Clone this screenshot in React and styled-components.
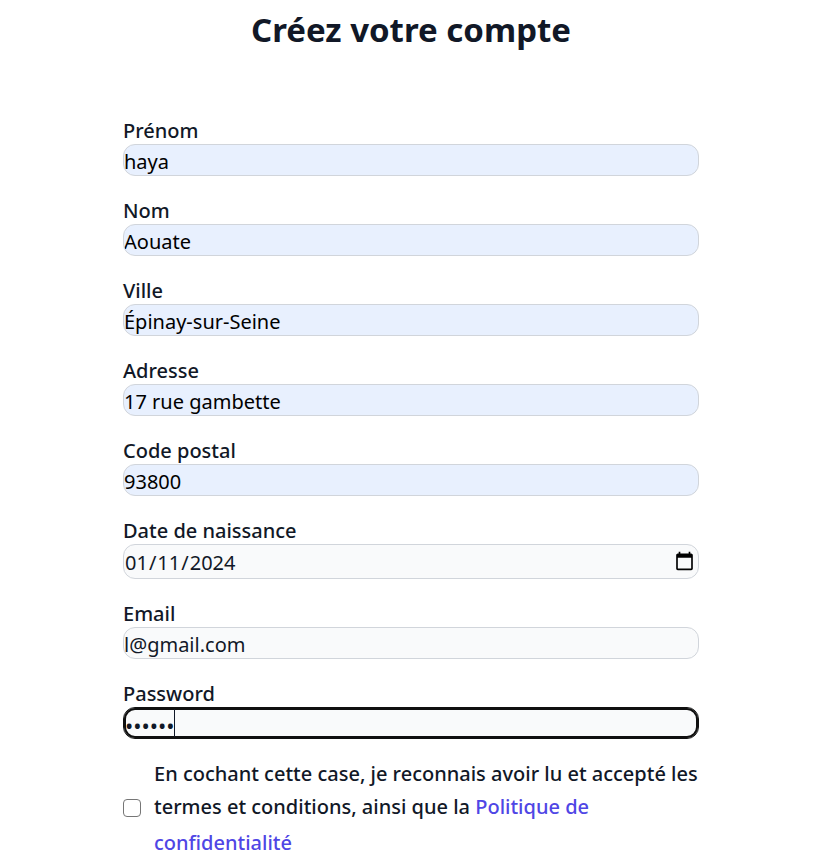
import React from "react";
import styled, { createGlobalStyle, css } from "styled-components";

const GlobalStyle = createGlobalStyle`
  *, *::before, *::after { box-sizing: border-box; }
  body {
    margin: 0;
    background: #fff;
    color: #111827;
    font-family: "Noto Sans", "Open Sans", sans-serif;
    font-size: 20px;
  }
`;

const Page = styled.main`
  padding: 8px 32px 0 24px;
`;

const Title = styled.h1`
  margin: 0 0 66px;
  font-size: 33px;
  line-height: 44px;
  font-weight: 700;
  text-align: center;
`;

const Form = styled.form`
  display: flex;
  flex-direction: column;
  gap: 20px;
  max-width: 576px;
  margin: 0 auto;
`;

const Field = styled.div`
  display: flex;
  flex-direction: column;

  & + & {
    padding-top: 2px;
  }
`;

const Label = styled.label`
  font-size: 20px;
  line-height: 26px;
  font-weight: 500;
`;

const InputFrame = styled.div`
  position: relative;
  display: flex;
`;

const Input = styled.input`
  width: 100%;
  height: ${(p) => (p.type === "date" ? 35 : 32)}px;
  margin: 0;
  padding: 2px 0 0;
  border: 1px solid #d1d5db;
  border-radius: 12px;
  background: ${(p) => (p.$filled ? "#e8f0fe" : "#f9fafb")};
  color: ${(p) => (p.$filled ? "#000" : "#111827")};
  font: inherit;
  outline: none;

  ${(p) =>
    p.$active &&
    css`
      border-color: #101010;
      box-shadow: inset 0 0 0 2px #101010;
      padding: 4px 0 0 1px;
      font-size: 22px;
    `}

  &::-webkit-datetime-edit,
  &::-webkit-datetime-edit-fields-wrapper {
    padding: 0;
  }

  &::-webkit-calendar-picker-indicator {
    width: 21px;
    height: 21px;
    margin: 0 3px 2px 0;
    padding: 0;
  }
`;

const Caret = styled.span`
  position: absolute;
  top: 2px;
  bottom: 2px;
  left: 51px;
  width: 1px;
  background: #111827;
`;

const Consent = styled.div`
  display: flex;
  align-items: center;
  gap: 13px;
`;

const Checkbox = styled.input`
  appearance: none;
  flex: none;
  width: 18px;
  height: 18px;
  margin: 0 0 4px;
  border: 1px solid #767676;
  border-radius: 4px;
  background: #fff;

  &:checked {
    background: #4f46e5;
  }
`;

const ConsentLabel = styled.label`
  line-height: 30px;
  font-weight: 500;
`;

const PolicyLink = styled.a`
  color: #4f46e5;
  line-height: 36px;
  text-decoration: none;
`;

const fields = [
  { id: "prenom", label: "Prénom", value: "haya", filled: true },
  { id: "nom", label: "Nom", value: "Aouate", filled: true },
  { id: "ville", label: "Ville", value: "Épinay-sur-Seine", filled: true },
  { id: "adresse", label: "Adresse", value: "17 rue gambette", filled: true },
  { id: "code-postal", label: "Code postal", value: "93800", filled: true },
  { id: "naissance", label: "Date de naissance", value: "2024-01-11", type: "date" },
  { id: "email", label: "Email", value: "l@gmail.com", type: "email" },
  { id: "password", label: "Password", value: "secret", type: "password", active: true },
];

export default function App() {
  return (
    <>
      <GlobalStyle />
      <Page>
        <Title>Créez votre compte</Title>
        <Form>
          {fields.map((f) => (
            <Field key={f.id}>
              <Label htmlFor={f.id}>{f.label}</Label>
              <InputFrame>
                <Input
                  id={f.id}
                  name={f.id}
                  type={f.type || "text"}
                  defaultValue={f.value}
                  $filled={f.filled}
                  $active={f.active}
                />
                {f.active && <Caret />}
              </InputFrame>
            </Field>
          ))}
          <Consent>
            <Checkbox id="terms" type="checkbox" />
            <ConsentLabel htmlFor="terms">
              En cochant cette case, je reconnais avoir lu et accepté les termes et conditions, ainsi
              que la <PolicyLink href="#politique">Politique de confidentialité</PolicyLink>
            </ConsentLabel>
          </Consent>
        </Form>
      </Page>
    </>
  );
}
